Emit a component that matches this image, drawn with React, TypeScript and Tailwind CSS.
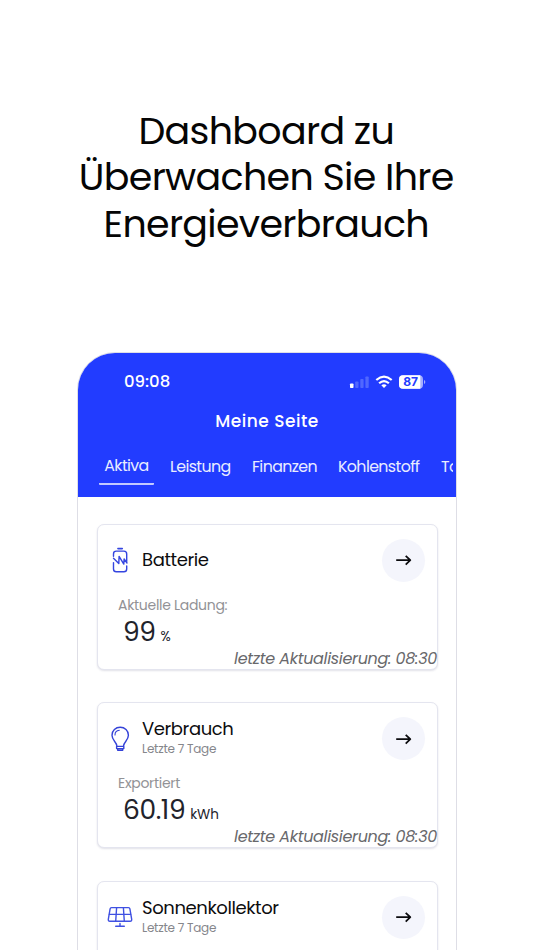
import React from 'react';

const face = "font-['Poppins','Inter','Liberation_Sans',sans-serif]";

function BatteryIcon() {
  return (
    <svg width="24" height="28" viewBox="0 0 24 28" fill="none" stroke="#3445e0" strokeWidth="1.400" strokeLinecap="round" strokeLinejoin="round">
      <path d="M9.900 2.600h4.400" strokeWidth="1.600" />
      <path d="M5.500 10.300V7.900Q5.500 5.100 8.300 5.100h7.600Q18.700 5.100 18.700 7.900v7.600" />
      <path d="M18.700 20v3Q18.700 25.800 15.900 25.800H8.300Q5.500 25.800 5.500 23V16.600" />
      <path d="M5.500 12.300l5.300 5.300.3-7.200 4.700 7.700.3-5.100 2.900 4" />
    </svg>
  );
}

function BulbIcon() {
  return (
    <svg width="24" height="28" viewBox="0 0 24 28" fill="none" stroke="#3442d8" strokeWidth="1.400" strokeLinecap="round" strokeLinejoin="round">
      <path d="M8.800 20.700C8.500 17.100 4 15.200 4 10.200C4 5.700 7.600 2.300 12.200 2.300s8.200 3.400 8.200 7.900c0 5-4.500 6.900-4.800 10.500" />
      <path d="M7 10C7 7.200 9 5.500 11.300 5.300" strokeWidth="1.100" />
      <path d="M8.600 21.400h7.200v2.200H8.600zM9.700 23.900v1.400h5v-1.400" />
    </svg>
  );
}

function SolarIcon() {
  return (
    <svg width="26" height="28" viewBox="0 0 26 28" fill="none" stroke="#3f50e2" strokeWidth="1.400" strokeLinecap="round" strokeLinejoin="round">
      <path d="M4.500 4.600h17q1.200 0 1.400 1.200l1.800 10.600q.2 1.900-1.600 1.900H2.900q-1.800 0-1.600-1.900L3.100 5.800q.2-1.200 1.400-1.200z" />
      <path d="M2.400 11.400h21.200M9.600 4.800L8.700 18.200M16.400 4.800l.9 13.400M13 20.500v2.500M8.700 23.300h8.600" />
    </svg>
  );
}

function Arrow() {
  return (
    <div className="flex size-[43px] shrink-0 items-center justify-center rounded-full bg-[#f4f5fc]">
      <svg width="18" height="14" viewBox="0 0 18 14" fill="none" stroke="#0b0b0e" strokeWidth="1.800" strokeLinejoin="round">
        <path d="M1.200 7.200h14M10.700 2.800L15.300 7.200l-4.600 4.400" />
      </svg>
    </div>
  );
}

type CardProps = {
  icon: React.ReactNode;
  title: string;
  sub?: string;
  reading?: { label: string; value: string; unit: string; updated: string };
};

function Card({ icon, title, sub, reading }: CardProps) {
  return (
    <section className="h-[146px] w-[341px] shrink-0 rounded-[7px] border border-[#e4e5ef] bg-white pt-[14px] shadow-[0_1px_2px_rgba(40,40,90,0.14)]">
      <div className="flex h-[43px] items-center pr-[12px]">
        <div className="ml-[9px] flex w-[26px] justify-center">{icon}</div>
        <div className={sub ? 'ml-[9px] flex-1 -mt-[3px]' : 'ml-[9px] flex-1 -mt-[1px]'}>
          <h2 className="h-[23px] text-[18px] leading-[23px] tracking-[-0.4px] text-[#0c0c0e]">{title}</h2>
          {sub && <p className="h-[17px] text-[12px] leading-[17px] tracking-[-0.25px] text-[#85868b]">{sub}</p>}
        </div>
        <Arrow />
      </div>
      {reading && (
        <>
          <p className="mt-[13px] ml-[20px] h-[20px] text-[14px] leading-[20px] tracking-[-0.3px] text-[#929296]">{reading.label}</p>
          <div className="ml-[25px] flex h-[34px] items-baseline gap-[5px] text-[#22232b]">
            <span className="text-[26.500px] leading-[34px] tracking-[-0.4px]">{reading.value}</span>
            <span className="text-[13.500px] tracking-[-0.1px]">{reading.unit}</span>
          </div>
          <p className="h-[20px] text-right text-[16px] leading-[20px] tracking-[-0.32px] whitespace-nowrap italic text-[#68686b]">
            {reading.updated}
          </p>
        </>
      )}
    </section>
  );
}

const updated = 'letzte Aktualisierung: 08:30';

export default function App() {
  return (
    <main className={`h-[950px] w-[534px] overflow-hidden bg-white ${face}`}>
      <h1 className="flex h-[352px] flex-col items-center pt-[107.500px] pr-[1.500px] text-[38px] leading-[46.500px] tracking-[-0.7px] whitespace-nowrap text-[#050505]">
        <span>Dashboard zu</span>
        <span>Überwachen Sie Ihre</span>
        <span>Energieverbrauch</span>
      </h1>
      <div className="ml-[77px] h-[640px] w-[380px] overflow-hidden rounded-t-[38px] border border-[#dedee6] bg-white">
        <header className="h-[143.500px] bg-[#223cff] text-white">
          <div className="flex h-[57px] items-center pr-[30px] pl-[46px]">
            <span className="flex-1 text-[16.500px] leading-[20px] font-medium">09:08</span>
            <svg width="78" height="16" viewBox="0 0 78 16">
              <rect x="2" y="9.500" width="3.500" height="4.500" rx=".8" fill="#fff" />
              <g fill="#5067ff">
                <rect x="7.200" y="7.500" width="3.300" height="6.500" rx=".8" />
                <rect x="12.300" y="5" width="3.300" height="9" rx=".8" />
                <rect x="17.400" y="2.500" width="3.300" height="11.500" rx=".8" />
              </g>
              <g fill="none" stroke="#fff" strokeWidth="2.200">
                <path d="M28.300 6q7.700-6.600 15.400 0M31.100 9.300q4.900-4.400 9.800 0" />
              </g>
              <path d="M33.300 11.300q2.700-2 5.400 0L36 14z" fill="#fff" />
              <rect x="51" y="1.300" width="24" height="13.400" rx="4" fill="#a5afff" />
              <path d="M55 1.300h17.300v13.400H55a4 4 0 0 1-4-4V5.300a4 4 0 0 1 4-4z" fill="#fff" />
              <path d="M76 6v4q1.300-.6 1.300-2T76 6z" fill="#a5afff" />
              <text x="62.600" y="12.300" textAnchor="middle" className="fill-[#223cff] font-['Inter'] text-[12px] font-bold">87</text>
            </svg>
          </div>
          <div className="-mt-[1px] h-[24px] text-center text-[17px] leading-[24px] font-medium tracking-[0.5px]">Meine Seite</div>
          <nav className="mr-[3px] flex overflow-hidden pt-[22px] pl-[21px] text-[15.800px] leading-[22px] tracking-[-0.6px] whitespace-nowrap text-[#e9ecff]">
            <div className="h-[30px] w-[55px] shrink-0 rounded-[1px] border-b-2 border-[#c3caff] text-center">Aktiva</div>
            <span className="ml-[16px] w-[82px] shrink-0 pt-px">Leistung</span>
            <span className="w-[86px] shrink-0 pt-px">Finanzen</span>
            <span className="w-[103px] shrink-0 pt-px">Kohlenstoff</span>
            <span className="shrink-0 pt-px">To</span>
          </nav>
        </header>
        <div className="flex flex-col gap-[32.500px] pt-[27px] pl-[19px]">
          <Card icon={<BatteryIcon />} title="Batterie" reading={{ label: 'Aktuelle Ladung:', value: '99', unit: '%', updated }} />
          <Card icon={<BulbIcon />} title="Verbrauch" sub="Letzte 7 Tage" reading={{ label: 'Exportiert', value: '60.19', unit: 'kWh', updated }} />
          <Card icon={<SolarIcon />} title="Sonnenkollektor" sub="Letzte 7 Tage" />
        </div>
      </div>
    </main>
  );
}
